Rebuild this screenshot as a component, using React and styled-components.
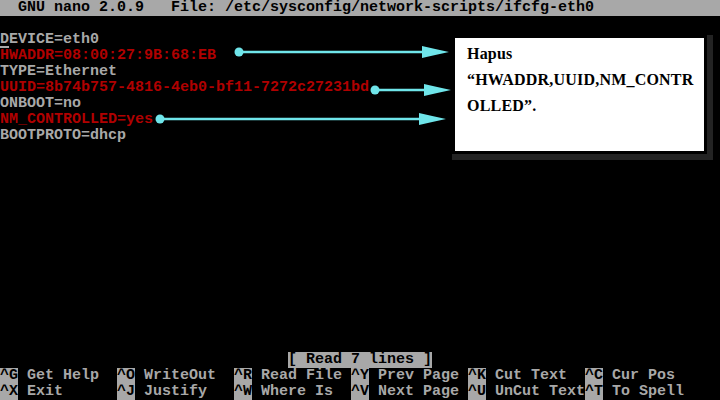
// Imports
import React from "react";
import styled, { createGlobalStyle } from "styled-components";

// Data
const lines = [
	{ text: "DEVICE=eth0", red: false, cursor: true },
	{ text: "HWADDR=08:00:27:9B:68:EB", red: true },
	{ text: "TYPE=Ethernet", red: false },
	{ text: "UUID=8b74b757-4816-4eb0-bf11-7272c27231bd", red: true },
	{ text: "ONBOOT=no", red: false },
	{ text: "NM_CONTROLLED=yes", red: true },
	{ text: "BOOTPROTO=dhcp", red: false },
];

const shortcuts = [
	["^G", "Get Help"], ["^O", "WriteOut"], ["^R", "Read File"],
	["^Y", "Prev Page"], ["^K", "Cut Text"], ["^C", "Cur Pos"],
	["^X", "Exit"], ["^J", "Justify"], ["^W", "Where Is"],
	["^V", "Next Page"], ["^U", "UnCut Text"], ["^T", "To Spell"],
];

// Arrows: dot at x1, tip at x2, on row y
const arrows = [
	{ x1: 239, x2: 449, y: 52 },
	{ x1: 375, x2: 451, y: 90 },
	{ x1: 160, x2: 446, y: 119 },
];

// Component
const App = () => {

	// Return
	return(
		<Screen>
			<GlobalStyle />
			<TitleBar>
				<span>  GNU nano 2.0.9</span>
				<span>   File: /etc/sysconfig/network-scripts/ifcfg-eth0</span>
			</TitleBar>
			<Row />
			{ lines.map((line) => (
				<Row key={ line.text } $red={ line.red }>
					{ line.cursor
						? <><Cursor>{ line.text[0] }</Cursor>{ line.text.slice(1) }</>
						: line.text }
				</Row>
			)) }
			<Spacer />
			<StatusRow>
				<Status>[ Read 7 lines ]</Status>
			</StatusRow>
			<Shortcuts>
				{ shortcuts.map(([key, label]) => (
					<Shortcut key={ key }>
						<Key>{ key }</Key>
						<span> { label }</span>
					</Shortcut>
				)) }
			</Shortcuts>

			<Arrows width="720" height="400" viewBox="0 0 720 400">
				{ arrows.map((a) => (
					<g key={ a.y } fill="#6fe5ea" stroke="#6fe5ea">
						<circle cx={ a.x1 } cy={ a.y } r="4.5" stroke="none" />
						<line x1={ a.x1 } y1={ a.y } x2={ a.x2 - 24 } y2={ a.y } strokeWidth="2.5" />
						<path
							d={ `M${ a.x2 - 27 } ${ a.y - 6 } Q${ a.x2 - 14 } ${ a.y - 3 } ${ a.x2 } ${ a.y } Q${ a.x2 - 14 } ${ a.y + 3 } ${ a.x2 - 27 } ${ a.y + 6 } Z` }
							stroke="none"
						/>
					</g>
				)) }
			</Arrows>

			<Callout>
				<p>Hapus</p>
				<p>“HWADDR,UUID,NM_CONTR</p>
				<p>OLLED”.</p>
			</Callout>
		</Screen>
	);

};

// Styled
const GlobalStyle = createGlobalStyle`
	html, body{
		margin: 0;
		padding: 0;
		background: #000;
	}
`;

const Screen = styled.div`
	position: relative;
	width: 720px;
	height: 400px;
	background: #000;
	color: #a8a8a8;
	font-family: "Liberation Mono", "DejaVu Sans Mono", monospace;
	font-size: 15px;
	font-weight: bold;
	line-height: 16px;
	display: flex;
	flex-direction: column;
	overflow: hidden;
	white-space: pre;
`;

const TitleBar = styled.div`
	height: 16px;
	background: #a8a8a8;
	color: #000;
	display: flex;
`;

const Row = styled.div`
	height: 16px;
	color: ${ (p) => p.$red ? "#b00000" : "#a8a8a8" };
`;

const Cursor = styled.span`
	box-shadow: inset 0 -2px 0 #a8a8a8;
`;

const Spacer = styled.div`
	flex: 1;
`;

const StatusRow = styled.div`
	height: 16px;
	display: flex;
	justify-content: center;
`;

const Status = styled.span`
	background: #a8a8a8;
	color: #000;
`;

const Shortcuts = styled.div`
	display: grid;
	grid-template-columns: repeat(5, 117px) 1fr;
	grid-auto-rows: 16px;
`;

const Shortcut = styled.div`
	display: flex;
`;

const Key = styled.span`
	background: #a8a8a8;
	color: #000;
`;

const Arrows = styled.svg`
	position: absolute;
	left: 0;
	top: 0;
	pointer-events: none;
`;

const Callout = styled.div`
	position: absolute;
	left: 455px;
	top: 38px;
	width: 249px;
	height: 113px;
	box-sizing: border-box;
	padding: 3px 0 0 12px;
	background: #fff;
	color: #000;
	box-shadow: 0 0 0 3px #000, 3px 3px 0 6px #232323;
	font-family: "Liberation Serif", "Times New Roman", serif;
	font-weight: bold;
	font-size: 16px;
	line-height: 26px;
	letter-spacing: 0.2px;
	white-space: nowrap;
	p{
		margin: 0;
	}
`;

// Export
export default App;
